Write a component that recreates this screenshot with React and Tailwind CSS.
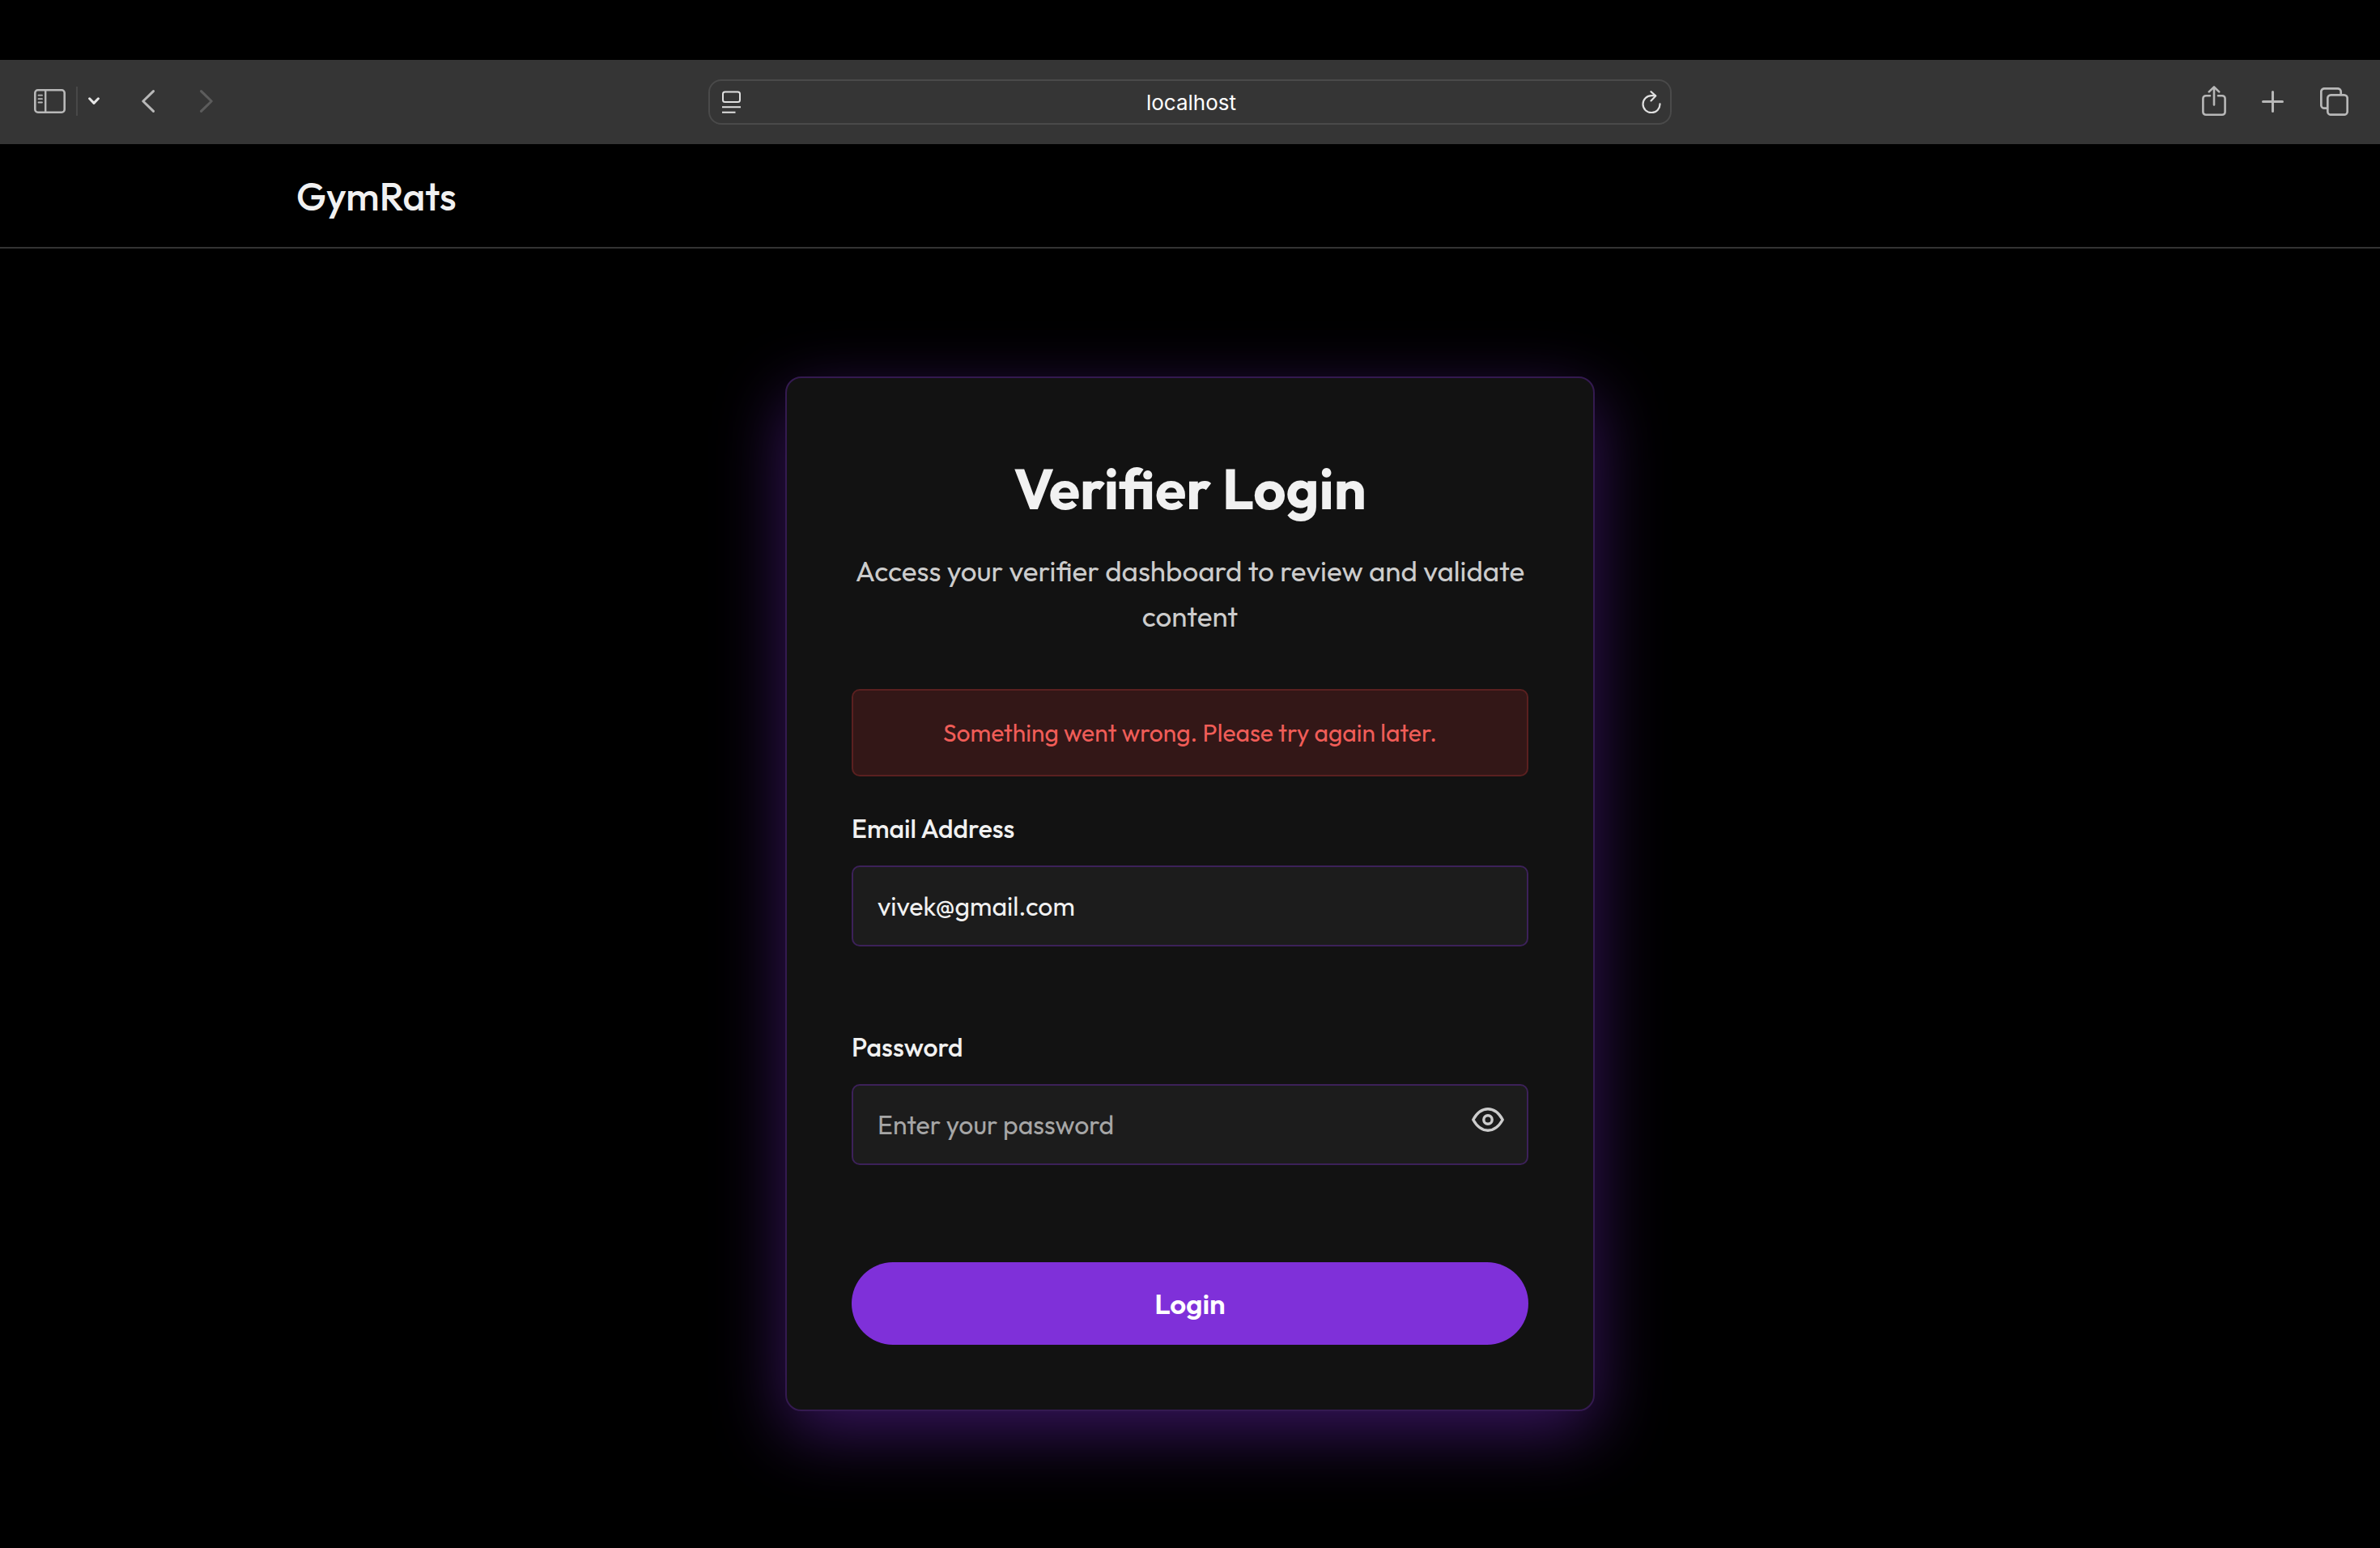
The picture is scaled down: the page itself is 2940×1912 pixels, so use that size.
const iconButton = "flex items-center justify-center text-[#b8b8b8]";

function BrowserBar() {
  return (
    <div className="grid h-[104px] grid-cols-[1fr_minmax(0,1190px)_1fr] items-center bg-[#353535]">
      <div className="flex items-center pb-0.5 pl-[42px]">
        <button type="button" aria-label="Show sidebar" className={iconButton}>
          <svg width="39" height="30" viewBox="0 0 39 30" fill="none" stroke="currentColor">
            <rect x="1.3" y="1.3" width="36.4" height="27.4" rx="3.5" strokeWidth="2.6" />
            <path d="M14.2 1v28" strokeWidth="2.4" />
            <path d="M5.5 7.7h4.5M5.5 12.2h4.5M5.5 16.5h4.5" strokeWidth="1.8" strokeLinecap="round" />
          </svg>
        </button>
        <span className="ml-[13px] h-9 w-0.5 bg-[#484848]" />
        <button type="button" aria-label="Tab groups" className="ml-[13px] text-[#e6e6e6]">
          <svg width="14" height="10" viewBox="0 0 14 10" fill="none" stroke="currentColor" strokeWidth="3" strokeLinecap="round" strokeLinejoin="round">
            <path d="M1.6 1.8 7 7.4l5.4-5.6" />
          </svg>
        </button>
        <button type="button" aria-label="Back" className="ml-[52px] text-[#b8b8b8]">
          <svg width="16" height="28" viewBox="0 0 16 28" fill="none" stroke="currentColor" strokeWidth="3" strokeLinecap="round" strokeLinejoin="round">
            <path d="M14.5 1.6 1.8 14l12.7 12.4" />
          </svg>
        </button>
        <button type="button" aria-label="Forward" className="ml-14 text-[#5c5c5c]">
          <svg width="16" height="28" viewBox="0 0 16 28" fill="none" stroke="currentColor" strokeWidth="3" strokeLinecap="round" strokeLinejoin="round">
            <path d="M1.5 1.6 14.2 14 1.5 26.4" />
          </svg>
        </button>
      </div>

      <div className="flex h-14 items-center rounded-2xl border-2 border-[#4a4a4a] pr-[11px] pl-[15px] text-[#e0e0e0]">
        <button type="button" aria-label="Page menu">
          <svg width="23" height="28" viewBox="0 0 23 28" fill="none" stroke="currentColor" strokeWidth="2">
            <rect x="1" y="1.5" width="21" height="12.5" rx="2.5" />
            <path d="M0 20.2h23M0 26.8h16.5" />
          </svg>
        </button>
        <input
          aria-label="Address"
          defaultValue="localhost"
          className="min-w-0 flex-1 bg-transparent text-center font-[Inter,sans-serif] text-[26px] text-white outline-none"
        />
        <button type="button" aria-label="Reload">
          <svg width="24" height="28" viewBox="0 0 24 28" fill="none" stroke="currentColor" strokeWidth="2.2" strokeLinecap="round" strokeLinejoin="round">
            <path d="M22.5 16.3A10.5 10.5 0 1 1 12 6.2H17" />
            <path d="M11.5 1.2 17.2 6.4l-5.7 6" />
          </svg>
        </button>
      </div>

      <div className="flex items-center justify-end pr-[39px] pb-0.5">
        <button type="button" aria-label="Share" className={iconButton}>
          <svg width="30" height="38" viewBox="0 0 30 38" fill="none" stroke="currentColor" strokeWidth="2.6" strokeLinecap="round" strokeLinejoin="round">
            <path d="M10 12.2H5a3.6 3.6 0 0 0-3.6 3.6v16.4A3.6 3.6 0 0 0 5 35.8h20a3.6 3.6 0 0 0 3.6-3.6V15.8a3.6 3.6 0 0 0-3.6-3.6h-5" />
            <path d="M15 23.5V1.6M8.8 7.4 15 1.4l6.2 6" />
          </svg>
        </button>
        <button type="button" aria-label="New tab" className="ml-11 text-[#b8b8b8]">
          <svg width="27" height="27" viewBox="0 0 27 27" fill="none" stroke="currentColor" strokeWidth="3" strokeLinecap="round">
            <path d="M13.5 1.5v24M1.5 13.5h24" />
          </svg>
        </button>
        <button type="button" aria-label="Tab overview" className="ml-[45px] text-[#b8b8b8]">
          <svg width="35" height="35" viewBox="0 0 35 35" fill="none" stroke="currentColor" strokeWidth="2.7">
            <rect x="9.3" y="9.3" width="24.4" height="24.4" rx="4" />
            <path d="M8.5 25.7H5.3a4 4 0 0 1-4-4V5.3a4 4 0 0 1 4-4h16.4a4 4 0 0 1 4 4v3.2" />
          </svg>
        </button>
      </div>
    </div>
  );
}

const inputClass =
  "h-[100px] w-full rounded-[10px] border-2 border-[#3c2159] bg-[#1c1c1c] px-[30px] text-[32px] text-[#f1f1f1] outline-none placeholder:text-[#a6a6a6] placeholder:opacity-100";

const labelClass = "text-[32px] leading-[51px] font-medium text-[#f1f1f1]";

function LoginCard() {
  return (
    <form
      onSubmit={(e) => e.preventDefault()}
      className="flex w-full max-w-[1000px] flex-col rounded-[20px] border-2 border-[#341a50] bg-[#121212] p-20 shadow-[0_26px_86px_rgba(127,48,217,0.44)]"
    >
      <h1 className="text-center text-[70px] leading-[112px] font-bold text-[#f1f1f1]">Verifier Login</h1>
      <p className="mt-[18px] text-center text-[35px] leading-[56px] text-[#cccccc]">
        Access your verifier dashboard to review and validate content
      </p>
      <p
        role="alert"
        className="mt-[62px] rounded-[10px] border-2 border-[#5a2020] bg-[#331717] py-7 text-center text-[30px] leading-[48px] text-[#f05d58]"
      >
        Something went wrong. Please try again later.
      </p>

      <div className="mt-[39px] flex flex-col gap-5">
        <label htmlFor="email" className={labelClass}>Email Address</label>
        <input id="email" type="email" defaultValue="vivek@gmail.com" className={inputClass} />
      </div>

      <div className="mt-[99px] flex flex-col gap-5">
        <label htmlFor="password" className={labelClass}>Password</label>
        <div className="relative">
          <input id="password" type="password" placeholder="Enter your password" className={inputClass} />
          <button
            type="button"
            aria-label="Show password"
            className="absolute top-7 right-7 flex h-8 w-11 items-center justify-center text-[#cccccc]"
          >
            <svg width="40" height="30" viewBox="0 0 40 30" fill="none" stroke="currentColor" strokeWidth="3.4" strokeLinejoin="round">
              <path d="M1.8 15C6.5 6.5 13 1.8 20 1.8S33.5 6.5 38.2 15C33.5 23.5 27 28.2 20 28.2S6.5 23.5 1.8 15Z" />
              <circle cx="20" cy="15" r="5.2" />
            </svg>
          </button>
        </div>
      </div>

      <button
        type="submit"
        className="mt-[120px] h-[102px] w-full rounded-full bg-[#7f30d9] text-[35px] font-semibold text-white"
      >
        Login
      </button>
    </form>
  );
}

export default function App() {
  return (
    <div className="flex min-h-screen flex-col bg-black pt-[74px] font-[Outfit,Lato,sans-serif]">
      <BrowserBar />
      <header className="border-b-2 border-[#333333] px-8">
        <div className="mx-auto flex max-w-[2208px] items-center pt-8 pb-[30px]">
          <a href="#" className="text-[48px] leading-[65px] font-medium text-[#f1f1f1]">GymRats</a>
        </div>
      </header>
      <main className="flex flex-1 items-start justify-center px-8 pt-[158px]">
        <LoginCard />
      </main>
    </div>
  );
}
